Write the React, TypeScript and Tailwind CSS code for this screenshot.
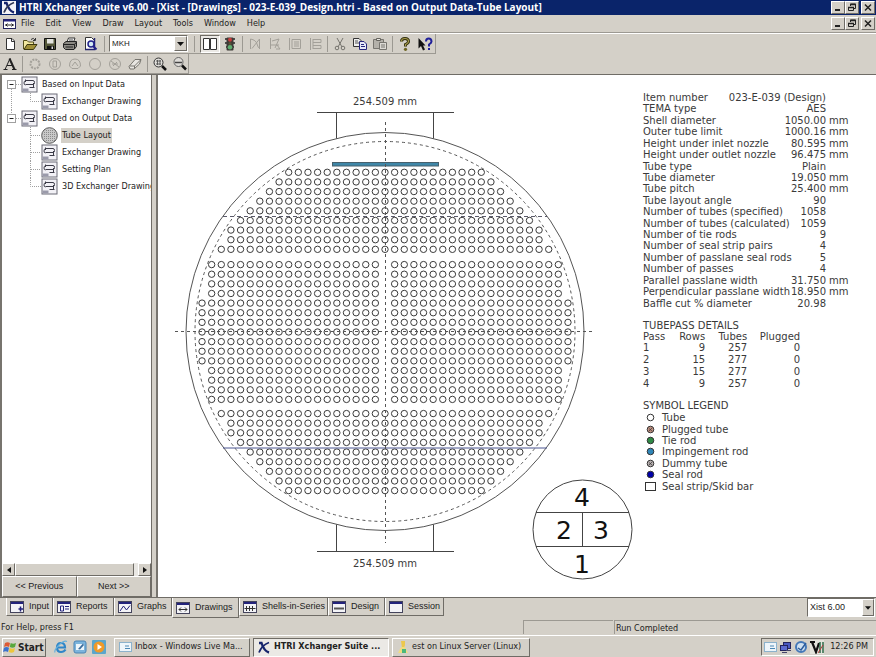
import React, { useState } from 'react';

const RAISED = 'border border-t-white border-l-white border-r-[#6f6c66] border-b-[#6f6c66]';
const SUNKEN = 'border border-t-[#6f6c66] border-l-[#6f6c66] border-r-white border-b-white';
const UI_FONT = "font-['DejaVu_Sans_Condensed','DejaVu_Sans',sans-serif]";
const MS_FONT = "font-['Liberation_Sans',sans-serif]";

interface TreeItem {
  label: string;
  level: number;
  icon?: 'drawing' | 'tubes';
  last?: boolean;
}

const treeItems: TreeItem[] = [
  { label: 'Based on Input Data', level: 0 },
  { label: 'Exchanger Drawing', level: 1, last: true },
  { label: 'Based on Output Data', level: 0, last: true },
  { label: 'Tube Layout', level: 1, icon: 'tubes' },
  { label: 'Exchanger Drawing', level: 1 },
  { label: 'Setting Plan', level: 1 },
  { label: '3D Exchanger Drawing', level: 1, last: true },
];

const details: [string, string, string?][] = [
  ['Item number', '023-E-039 (Design)'],
  ['TEMA type', 'AES'],
  ['Shell diameter', '1050.00', 'mm'],
  ['Outer tube limit', '1000.16', 'mm'],
  ['Height under inlet nozzle', '80.595', 'mm'],
  ['Height under outlet nozzle', '96.475', 'mm'],
  ['Tube type', 'Plain'],
  ['Tube diameter', '19.050', 'mm'],
  ['Tube pitch', '25.400', 'mm'],
  ['Tube layout angle', '90'],
  ['Number of tubes (specified)', '1058'],
  ['Number of tubes (calculated)', '1059'],
  ['Number of tie rods', '9'],
  ['Number of seal strip pairs', '4'],
  ['Number of passlane seal rods', '5'],
  ['Number of passes', '4'],
  ['Parallel passlane width', '31.750', 'mm'],
  ['Perpendicular passlane width', '18.950', 'mm'],
  ['Baffle cut % diameter', '20.98'],
];

const passes = [
  [1, 9, 257, 0],
  [2, 15, 277, 0],
  [3, 15, 277, 0],
  [4, 9, 257, 0],
];

const legend = [
  { label: 'Tube', fill: '#ffffff' },
  { label: 'Plugged tube', fill: '#c09080' },
  { label: 'Tie rod', fill: '#2f8a45' },
  { label: 'Impingement rod', fill: '#2f86b8' },
  { label: 'Dummy tube', fill: '#b8b0b0' },
  { label: 'Seal rod', fill: '#0000a8' },
  { label: 'Seal strip/Skid bar', fill: '' },
];

// Tube field geometry, in drawing units
const CX = 227;
const CY = 257;
const PITCH = 9.63;
const outerRows = [10, 11, 12, 13, 14, 15, 16, 16, 17];

function buildTubes() {
  const tubes: { x: number; y: number }[] = [];
  outerRows.forEach((n, row) => {
    for (let i = -n; i <= n; i++) {
      tubes.push({ x: CX + i * PITCH, y: 97.3 + row * PITCH });
      tubes.push({ x: CX + i * PITCH, y: 415.6 - row * PITCH });
    }
  });
  for (let row = 0; row < 15; row++) {
    const n = row >= 4 && row <= 10 ? 19 : 18;
    for (let i = 1; i <= n; i++) {
      tubes.push({ x: CX - i * PITCH, y: CY + (row - 7) * PITCH });
      tubes.push({ x: CX + i * PITCH, y: CY + (row - 7) * PITCH });
    }
  }
  return tubes;
}

const tubes = buildTubes();

function TubeLayoutDrawing() {
  return (
    <svg width="476" height="522" viewBox="0 0 476 522" className="shrink-0" fontFamily="'DejaVu Sans', sans-serif" fill="none">
      {/* Shell and outer tube limit */}
      <circle cx={CX} cy="256.5" r="199" stroke="#555" />
      <circle cx={CX} cy="256.5" r="190" stroke="#555" strokeDasharray="3 3" />

      {/* Nozzles */}
      <g stroke="#444">
        <path d="M159 37.5H296M178.5 37.5V63.5M275.5 37.5V63.5" />
        <path d="M159 476.5H296M178.5 476.5V449.5M275.5 476.5V449.5" />
      </g>

      {tubes.map((t, i) => (
        <circle key={i} cx={t.x} cy={t.y} r="3.2" stroke="#3a3a3a" />
      ))}

      {/* Impingement plate */}
      <rect x="174.5" y="87.5" width="106" height="3.5" fill="#3f87a8" stroke="#47606c" />

      {/* Baffle cuts and centre lines */}
      <path d="M65 141.5H389" stroke="#5a5a6a" strokeDasharray="4 3" />
      <path d="M65 373H389" stroke="#4a5590" />
      <path d="M227.5 47V468M17 256.5H437" stroke="#555" strokeDasharray="3 3" />

      <g fill="#3a3a3a" fontSize="10" textAnchor="middle">
        <text x="227" y="30">254.509 mm</text>
        <text x="227" y="492">254.509 mm</text>
      </g>

      {/* Pass arrangement key */}
      <circle cx="424.5" cy="454.5" r="49.5" stroke="#444" />
      <path d="M378 437.5H471M378 471.5H471M424.5 437.5V471.5" stroke="#444" />
      <g fill="#111" fontSize="25" textAnchor="middle">
        <text x="424" y="431">4</text>
        <text x="406" y="464">2</text>
        <text x="443" y="464">3</text>
        <text x="424" y="498">1</text>
      </g>
    </svg>
  );
}

function DetailsPanel() {
  return (
    <div className="pl-[9px] pt-[17px] shrink-0 text-[10px] leading-[11px] text-[#3a3a3a] font-['DejaVu_Sans',sans-serif] whitespace-nowrap">
      <dl className="grid h-[217px] w-[204px]">
        {details.map(([label, value, unit]) => (
          <div key={label} className="flex">
            <dt>{label}</dt>
            <dd className="ml-auto">{value}</dd>
            <dd className="w-[21px] pl-[3px]">{unit}</dd>
          </div>
        ))}
      </dl>

      <table className="mt-[11px] h-[58px] border-collapse text-right">
        <caption className="text-left">TUBEPASS DETAILS</caption>
        <thead>
          <tr>
            <th className="w-[22px] p-0 text-left font-normal">Pass</th>
            <th className="w-[40px] p-0 font-normal">Rows</th>
            <th className="w-[42px] p-0 font-normal">Tubes</th>
            <th className="w-[53px] p-0 font-normal">Plugged</th>
          </tr>
        </thead>
        <tbody>
          {passes.map(([pass, rows, count, plugged]) => (
            <tr key={pass}>
              <td className="p-0 text-left">{pass}</td>
              <td className="p-0">{rows}</td>
              <td className="p-0">{count}</td>
              <td className="p-0">{plugged}</td>
            </tr>
          ))}
        </tbody>
      </table>

      <h2 className="mt-[11px] mb-px">SYMBOL LEGEND</h2>
      <ul className="grid h-[80px]">
        {legend.map(item => (
          <li key={item.label} className="flex items-center">
            <svg width="19" height="11" viewBox="0 0 19 11" fill="none" stroke="#333">
              {item.fill ? <circle cx="7.5" cy="5.5" r="3.3" fill={item.fill} /> : <rect x="2.5" y="1.5" width="10" height="8" />}
              {(item.label === 'Plugged tube' || item.label === 'Dummy tube') && <path d="M6 4.5L9 7M9 4L6 7" strokeWidth=".7" />}
            </svg>
            {item.label}
          </li>
        ))}
      </ul>
    </div>
  );
}

function DrawingIcon() {
  return (
    <svg width="17" height="17" viewBox="0 0 17 17" fill="none" className="shrink-0">
      <rect x="1" y="1" width="15" height="15" fill="#f2f1f6" stroke="#6a6a76" />
      <path d="M1.5 12.5H7.5V15.5H1.5Z" fill="#9a9aaa" />
      <path d="M4.500 3.500V6M4.500 4.500H12Q13.500 4.500 13.500 6.500T12 8.500H4.500M12.500 7V11M4.500 4.500Q3 5 3 7T4.500 9M8.500 11.500H13.500" stroke="#3c3c48" />
    </svg>
  );
}

function TubesIcon() {
  const dots = [];
  for (let y = 3; y < 15; y += 2) {
    for (let x = 3; x < 15; x += 2) {
      if (Math.hypot(x - 8.5, y - 8.5) < 7) dots.push(<circle key={`${x}-${y}`} cx={x + 0.5} cy={y + 0.5} r="0.5" fill="#777" />);
    }
  }
  return (
    <svg width="17" height="17" viewBox="0 0 17 17" className="shrink-0">
      <circle cx="8.5" cy="8.5" r="7.8" fill="#c9c9c9" stroke="#555" />
      {dots}
    </svg>
  );
}

function Expander({ last }: { last?: boolean }) {
  return (
    <svg width="20" height="17" viewBox="0 0 20 17" fill="none" className="shrink-0">
      <path d={last ? 'M10.5 0V4M15 8.5H20' : 'M10.5 13V17M15 8.5H20'} stroke="#a8a8a8" strokeDasharray="1 1" />
      <rect x="6.5" y="4.500" width="8" height="8" fill="#fff" stroke="#a0a0a0" />
      <path d="M8.500 8.500H12.500" stroke="#222" />
    </svg>
  );
}

function Branch({ d }: { d: string }) {
  return (
    <svg width="20" height="17" viewBox="0 0 20 17" fill="none" className="shrink-0">
      <path d={d} stroke="#a0a0a0" strokeDasharray="1 1" />
    </svg>
  );
}

function Sidebar() {
  const [selected, setSelected] = useState(3);
  return (
    <aside className="flex w-[152px] shrink-0 flex-col border-l-2 border-l-[#77746e] border-r border-r-[#6f6c66] bg-white">
      <ul className="-ml-px flex-1 overflow-hidden pt-px text-[9px] text-[#222]">
        {treeItems.map((item, i) => (
          <li key={i} className="flex h-[17px] items-center whitespace-nowrap">
            {item.level === 0 ? (
              <Expander last={item.last} />
            ) : (
              <>
                <Branch d={i === 1 ? 'M10.5 0V17' : ''} />
                <Branch d={item.last ? 'M9.5 0V8.5H20' : 'M9.5 0V17M10 8.5H20'} />
              </>
            )}
            {item.icon === 'tubes' ? <TubesIcon /> : <DrawingIcon />}
            <button
              onClick={() => setSelected(i)}
              className={`ml-[3px] h-[15px] px-px ${selected === i ? 'bg-[#d4d0c8]' : ''}`}
            >
              {item.label}
            </button>
          </li>
        ))}
      </ul>

      <div className="flex h-[13px] bg-[#e9e7e3]">
        <button aria-label="Scroll left" className={`flex w-[13px] items-center justify-center bg-[#d4d0c8] ${RAISED}`}>
          <svg width="4" height="6" viewBox="0 0 4 6"><path d="M4 0V6L0 3Z" fill="#111" /></svg>
        </button>
        <div className={`w-[119px] bg-[#d4d0c8] ${RAISED}`} />
        <button aria-label="Scroll right" className={`ml-auto flex w-[13px] items-center justify-center bg-[#d4d0c8] ${RAISED}`}>
          <svg width="4" height="6" viewBox="0 0 4 6"><path d="M0 0V6L4 3Z" fill="#111" /></svg>
        </button>
      </div>
      <div className={`flex h-[21px] text-[9px] text-[#222] ${MS_FONT}`}>
        <button className={`flex-1 bg-[#d4d0c8] ${RAISED}`}>&lt;&lt; Previous</button>
        <button className={`flex-1 bg-[#d4d0c8] ${RAISED}`}>Next &gt;&gt;</button>
      </div>
    </aside>
  );
}

function WindowButtons() {
  const btn = `flex h-[13px] w-[14px] items-center justify-center bg-[#d4d0c8] ${RAISED}`;
  return (
    <div className="ml-auto flex pr-px">
      <button aria-label="Minimize" className={btn}>
        <svg width="10" height="9" viewBox="0 0 10 9"><path d="M2 7H7" stroke="#222" strokeWidth="2" /></svg>
      </button>
      <button aria-label="Restore" className={btn}>
        <svg width="10" height="9" viewBox="0 0 10 9" fill="none" stroke="#222">
          <path d="M3.500 3V1H8.500V5.500H7" />
          <path d="M3 1.500H9M1 4.500H7" strokeWidth="1.500" />
          <path d="M1.500 4V7.500H6.500V4" />
        </svg>
      </button>
      <button aria-label="Close" className={`${btn} ml-[2px]`}>
        <svg width="10" height="9" viewBox="0 0 10 9"><path d="M2 1.500L8 7.500M8 1.500L2 7.500" stroke="#222" strokeWidth="1.500" /></svg>
      </button>
    </div>
  );
}

function XLogo({ dark }: { dark?: boolean }) {
  return (
    <svg width="14" height="13" viewBox="0 0 14 13" fill="none" className="shrink-0">
      {!dark && <rect width="14" height="13" fill="#f4f4f8" />}
      <path d="M2 2H4.500Q7 10 12 11.500" stroke="#16246c" strokeWidth="2.400" />
      <path d="M12 1.500Q5 4 2 11.500" stroke={dark ? '#16246c' : '#333a55'} strokeWidth="1.800" />
    </svg>
  );
}

function ToolButton({ label, pressed, children }: { label: string; pressed?: boolean; children: React.ReactNode }) {
  return (
    <button
      aria-label={label}
      className={`flex h-[18px] w-[20px] shrink-0 items-center justify-center ${pressed ? `bg-[#ebe9e5] ${SUNKEN}` : ''}`}
    >
      <svg width="16" height="16" viewBox="0 0 16 16" fill="none" className="shrink-0">
        {children}
      </svg>
    </button>
  );
}

function Separator() {
  return <div className="mx-[2px] h-[16px] w-px shrink-0 bg-[#9c9992]" />;
}

const GREY = '#a3a099';

function MainToolbar() {
  return (
    <div className="flex h-[20px] w-[436px] items-center border-r border-b border-[#9c9992]">
      <ToolButton label="New"><path d="M4.500 2.500H10L12.500 5V13.500H4.500Z" fill="#fff" stroke="#333" /><path d="M9.500 2.500V5.500H12.500" stroke="#333" /></ToolButton>
      <ToolButton label="Open">
        <path d="M1.500 13V4.500H5L6.500 6H11.500V8" fill="#f3e9a0" stroke="#55501c" />
        <path d="M2 13.500L5 8.500H15L11.500 13.500Z" fill="#a09038" stroke="#3c380e" />
        <path d="M9 3.500Q11.500 1 13 4M13.500 2V4.500H11" stroke="#333" />
      </ToolButton>
      <ToolButton label="Save">
        <path d="M2.500 2.500H13.500V13.500H2.500Z" fill="#55583a" stroke="#111" />
        <path d="M5 3H11.500V7.500H5Z" fill="#e4e4e0" />
        <path d="M5 10H12V13H5Z" fill="#111" /><path d="M9.500 10.500H11V13H9.500Z" fill="#ddd" />
      </ToolButton>
      <ToolButton label="Print">
        <path d="M5 6L6.500 2H13L11.500 6Z" fill="#fff" stroke="#333" />
        <path d="M1.500 7.500L4 5.500H14.500V10.500L12 13.500H3.500L1.500 11.500Z" fill="#8b8983" stroke="#222" />
        <path d="M2 8.500H12.500L14.500 6M3.500 11H11M12.500 8.500V13" stroke="#222" />
        <path d="M7 4H11" stroke="#444" />
      </ToolButton>
      <ToolButton label="Print Preview">
        <path d="M3.500 1.500H9.500L12.500 4.500V13.500H3.500Z" fill="#fff" stroke="#333" />
        <path d="M12.500 2V13.500H3" stroke="#23236e" strokeWidth="1.500" />
        <circle cx="9" cy="8" r="3" fill="#d6ecf4" stroke="#22228a" strokeWidth="1.500" />
        <path d="M11 10L14.500 13.500" stroke="#22228a" strokeWidth="2" />
      </ToolButton>
      <div className="mx-[4px] h-[16px] w-px bg-[#9c9992]" />
      <div className={`relative flex h-[17px] w-[81px] bg-white ${SUNKEN}`}>
        <select aria-label="Unit set" className={`w-full appearance-none pl-[2px] text-[8px] text-[#222] ${MS_FONT}`}>
          <option>MKH</option>
        </select>
        <span className={`pointer-events-none absolute inset-y-0 right-0 flex w-[13px] items-center justify-center bg-[#d4d0c8] ${RAISED}`}>
          <svg width="7" height="4" viewBox="0 0 7 4"><path d="M0 0H7L3.500 4Z" fill="#111" /></svg>
        </span>
      </div>
      <div className="ml-[6px] mr-[5px] h-[16px] w-px bg-[#9c9992]" />
      <ToolButton label="Input panels" pressed>
        <path d="M1.500 2.500H7.500V13.500H1.500ZM8.500 2.500H14.500V13.500H8.500Z" fill="#fff" stroke="#333" />
      </ToolButton>
      <ToolButton label="Run">
        <path d="M3 3H13M3 7H13M4 11H12" stroke="#222" strokeWidth="1.500" />
        <rect x="4.500" y="1.500" width="7" height="13" rx="1" fill="#3d3a36" />
        <circle cx="8" cy="3.800" r="2" fill="#c83c3c" />
        <circle cx="8" cy="7.600" r="1.500" fill="#5a5238" />
        <circle cx="8" cy="11.300" r="2.300" fill="#5fae70" />
      </ToolButton>
      <Separator />
      <ToolButton label="Case">
        <path d="M3.500 3V13M3.500 3Q9 4 10 8T13 13M12.500 3L5 12.500M12.500 3V13" stroke={GREY} />
      </ToolButton>
      <ToolButton label="Profile">
        <path d="M3.500 2V13M3.500 9H12M5 5L12 3M12 3L8 12M9 13H13M10 9L13 13" stroke={GREY} />
      </ToolButton>
      <ToolButton label="Grid">
        <path d="M2.500 2V14M5 3.500H13.500V12.500H5ZM7 6H12M7 8H12M7 10H12" stroke={GREY} />
      </ToolButton>
      <ToolButton label="Chart">
        <path d="M3.500 2V14M6 3.500H14V6.500H6M6 9.500H14V12.500H6M6 3V13" stroke={GREY} />
      </ToolButton>
      <Separator />
      <ToolButton label="Cut">
        <path d="M5 2L10 11M11 2L6 11" stroke="#77756f" />
        <circle cx="5" cy="12" r="1.800" stroke="#77756f" /><circle cx="11" cy="12" r="1.800" stroke="#77756f" />
      </ToolButton>
      <ToolButton label="Copy">
        <path d="M1.500 2.500H7L9.500 5V10.500H1.500Z" fill="#eee" stroke="#333" />
        <path d="M3 5H6M3 7H7" stroke="#555" />
        <path d="M7.500 5.500H12L14.500 8V13.500H7.500Z" fill="#e6e8f8" stroke="#26267c" />
        <path d="M9 8.500H12M9 10.500H13" stroke="#26267c" />
      </ToolButton>
      <ToolButton label="Paste">
        <path d="M1.500 3.500H11.500V12.500H1.500Z" fill="#b4b1aa" stroke="#77756f" />
        <path d="M4.500 2.500H8.500V4.500H4.500Z" fill="#e6e4df" stroke="#66645e" />
        <path d="M7.500 6.500H14.500V13.500H7.500Z" fill="#dcdad4" stroke="#77756f" /><path d="M9 9H13M9 11H13" stroke="#77756f" />
      </ToolButton>
      <Separator />
      <ToolButton label="Help">
        <path d="M4.500 5.500Q4.500 2.500 8 2.500T11.500 5.500Q11.500 7 8.500 8.500V10.500" stroke="#33300f" strokeWidth="3" />
        <path d="M4.500 5.500Q4.500 2.500 8 2.500T11.500 5.500Q11.500 7 8.500 8.500V10" stroke="#a89c4c" strokeWidth="1.200" />
        <circle cx="8.500" cy="13.300" r="1.600" fill="#6c6320" />
      </ToolButton>
      <ToolButton label="Context Help">
        <path d="M1.500 2V12.500L4 10L6 14.500L8 13.500L6 9.500H8.500Z" fill="#111" />
        <path d="M9 5.500Q9 2.500 11.700 2.500T14.500 5.500Q14.500 7 12 8.500V10.500M12 12V14" stroke="#20209a" strokeWidth="2" />
      </ToolButton>
    </div>
  );
}

function DrawToolbar() {
  return (
    <div className="flex h-[20px] w-[189px] items-center border-r border-b border-[#9c9992]">
      <ToolButton label="Text">
        <path d="M3 13.500L8 2.500M5 9.500H11" stroke="#222" />
        <path d="M7.500 2.500L12.500 13.500" stroke="#222" strokeWidth="2" />
        <path d="M1.500 13.500H5.500M10 13.500H14.500" stroke="#222" />
      </ToolButton>
      <Separator />
      <ToolButton label="Tube"><circle cx="8" cy="8" r="4.500" stroke={GREY} strokeDasharray="2 1" strokeWidth="2" /></ToolButton>
      <ToolButton label="Plugged"><circle cx="8" cy="8" r="5.500" stroke={GREY} /><path d="M6 5H9.500V11H6Z" stroke={GREY} /></ToolButton>
      <ToolButton label="Tie rod"><path d="M2.500 10Q2.500 3 8 3T13.500 10L11 12.500H5ZM5 10L8 6L11 10" stroke={GREY} /></ToolButton>
      <ToolButton label="Rod"><circle cx="8" cy="8" r="5.500" stroke={GREY} /></ToolButton>
      <ToolButton label="Dummy"><circle cx="8" cy="8" r="5.500" stroke={GREY} /><path d="M4 5L12 11M6 10L10 6M5 8H11" stroke={GREY} /></ToolButton>
      <ToolButton label="Erase"><path d="M2 10.500L8 3.500H14L12.500 8L7 13H3Z" fill="#e8e6e2" stroke="#77756f" /><path d="M2.500 10H7.500L13.500 4M7.500 10V13" stroke="#77756f" /></ToolButton>
      <Separator />
      <ToolButton label="Zoom In">
        <circle cx="6.500" cy="6.500" r="4.500" fill="#dedcd8" stroke="#333" /><path d="M4 5H9M4 8H9M5.500 4V9M8 4V9" stroke="#444" strokeWidth=".8" />
        <path d="M10 10L14 14" stroke="#111" strokeWidth="2.500" />
      </ToolButton>
      <ToolButton label="Zoom Out">
        <circle cx="6.500" cy="6" r="4.500" fill="#dedcd8" stroke="#666" /><path d="M3 6.500H10" stroke="#444" strokeWidth="1.500" />
        <path d="M10 9.500L14 13.500" stroke="#111" strokeWidth="2.500" />
      </ToolButton>
    </div>
  );
}

function TabIcon({ kind }: { kind: string }) {
  return (
    <svg width="14" height="12" viewBox="0 0 14 12" fill="none" className="shrink-0">
      <rect x=".5" y=".5" width="13" height="11" fill="#f3f3f7" stroke="#44445c" />
      <rect x="1" y="1" width="12" height="2" fill="#23237c" />
      {kind === 'Input' && <path d="M8.500 8H13M10.500 5.500V10.500" stroke="#23237c" strokeWidth="1.500" />}
      {kind === 'Reports' && <path d="M3.500 5H6.500V10H3.500ZM8 5.500H12M8 8H12" stroke="#23237c" />}
      {kind === 'Graphs' && <path d="M2 10L5.500 5L8.500 9L12 4.500" stroke="#23237c" />}
      {kind === 'Drawings' && <path d="M3 7.500H11M5 5.500L3 7.500L5 9.500M9 5.500L11 7.500L9 9.500" stroke="#333" />}
      {kind === 'Shells-in-Series' && <path d="M1.500 7.500H12.500M3.500 5V10M6.500 5V10M9.500 5V10" stroke="#333" />}
      {kind === 'Design' && <path d="M2 7.500H12" stroke="#555" strokeWidth="2" />}
    </svg>
  );
}

const tabs = [
  { name: 'Input', width: 'w-[47px]' },
  { name: 'Reports', width: 'w-[61px]' },
  { name: 'Graphs', width: 'w-[58px]' },
  { name: 'Drawings', width: 'w-[67px]' },
  { name: 'Shells-in-Series', width: 'w-[89px]' },
  { name: 'Design', width: 'w-[57px]' },
  { name: 'Session', width: 'w-[59px]' },
];

function ViewTabs() {
  const [active, setActive] = useState('Drawings');
  return (
    <div className="flex h-[21px] items-start border-t border-[#6f6c66] pl-[6px] pr-px">
      {tabs.map(tab => (
        <button
          key={tab.name}
          onClick={() => setActive(tab.name)}
          className={`flex shrink-0 items-center gap-[5px] whitespace-nowrap border-r border-b border-[#6f6c66] border-l border-l-white pt-px pl-[3px] text-[9px] text-[#222] ${MS_FONT} ${tab.width} ${active === tab.name ? 'h-[20px]' : 'h-[18px]'}`}
        >
          <TabIcon kind={tab.name} />
          {tab.name}
        </button>
      ))}
      <div className={`relative ml-auto flex h-[19px] w-[68px] bg-white ${SUNKEN}`}>
        <select aria-label="Method version" className={`w-full appearance-none pl-[2px] text-[9px] text-[#222] ${MS_FONT}`}>
          <option>Xist 6.00</option>
        </select>
        <span className={`pointer-events-none absolute inset-y-0 right-0 flex w-[12px] items-center justify-center bg-[#d4d0c8] ${RAISED}`}>
          <svg width="6" height="4" viewBox="0 0 7 4"><path d="M0 0H7L3.500 4Z" fill="#111" /></svg>
        </span>
      </div>
    </div>
  );
}

function Taskbar() {
  return (
    <footer className="flex h-[22px] items-center border-t border-white pl-[2px] pr-[2px] pt-px text-[9px] text-[#222]">
      <button className={`flex h-[19px] w-[44px] items-center gap-px text-[10px] font-bold ${RAISED}`}>
        <svg width="14" height="14" viewBox="0 0 14 14" className="shrink-0">
          <path d="M2 3Q4.500 1.500 7 3L6 7Q3.500 5.500 1 7Z" fill="#dd5a35" />
          <path d="M7.700 3Q10 4.500 13 3L12 7Q9.500 8.500 6.800 7Z" fill="#58a83c" />
          <path d="M1 7.700Q3.500 6.500 6 7.700L5 12Q2.500 10.500 0 12Z" fill="#3c72cc" />
          <path d="M6.700 7.800Q9 9.500 12 8L11 12Q8.500 13.500 5.700 12Z" fill="#ecc63c" />
        </svg>
        Start
      </button>
      <div className="flex w-[68px] items-center gap-[5px] pl-[8px]">
        <button aria-label="Internet Explorer">
          <svg width="14" height="14" viewBox="0 0 14 14" fill="none">
            <path d="M11.500 9.500Q10 12 7 12Q3 12 3 7.500T7 3Q11 3 11 7.500H4" stroke="#2f86c8" strokeWidth="2.200" />
            <path d="M1 12.500Q0 10 5 5T13 1.500" stroke="#66b0dc" strokeWidth="1.200" />
          </svg>
        </button>
        <button aria-label="Show Desktop">
          <svg width="14" height="14" viewBox="0 0 14 14" fill="none">
            <rect x="1" y="1" width="12" height="12" rx="2" fill="#7cb4dc" stroke="#4a84b4" />
            <path d="M3 4H11V10H3Z" fill="#eef6fb" /><path d="M5 9L10 3.500L11 5L7 9.500Z" fill="#3a6c9c" />
          </svg>
        </button>
        <button aria-label="Media Player">
          <svg width="14" height="14" viewBox="0 0 14 14">
            <rect x="0" y="0" width="14" height="14" rx="1" fill="#5aa6cc" /><circle cx="7" cy="7" r="5.500" fill="#f09a28" /><path d="M5.500 4V10L10 7Z" fill="#fff" />
          </svg>
        </button>
      </div>
      <button className={`flex h-[19px] w-[136px] items-center gap-[3px] whitespace-nowrap pl-[4px] ${RAISED}`}>
        <svg width="13" height="12" viewBox="0 0 13 12"><rect x=".5" y="1.500" width="12" height="9" fill="#eef5fa" stroke="#8cb2cc" /><path d="M6 5H10M6 7.500H11" stroke="#4c88b4" /></svg>
        Inbox - Windows Live Ma...
      </button>
      <button className={`ml-[3px] flex h-[19px] w-[136px] items-center gap-[3px] whitespace-nowrap bg-[#ebe9e5] pl-[3px] font-bold ${SUNKEN}`}>
        <XLogo dark />
        HTRI Xchanger Suite ...
      </button>
      <button className={`ml-[3px] flex h-[19px] w-[138px] items-center gap-[3px] whitespace-nowrap pl-[4px] ${RAISED}`}>
        <svg width="12" height="14" viewBox="0 0 12 14"><path d="M4 1H8V5L7 8H5Z" fill="#ecc84c" /><path d="M1 13L4 7H8L11 13Z" fill="#f0dc80" /><path d="M5 9H9V13H5Z" fill="#4ab87c" /></svg>
        est on Linux Server (Linux)
      </button>
      <div className={`ml-auto flex h-[18px] w-[113px] items-center gap-[2px] pl-[2px] ${SUNKEN}`}>
        <svg width="13" height="12" viewBox="0 0 13 12"><rect x=".5" y="1.500" width="12" height="9" fill="#eef5fa" stroke="#8cb2cc" /><path d="M6 5H10M6 7.500H11" stroke="#4c88b4" /></svg>
        <svg width="13" height="13" viewBox="0 0 13 13"><rect x="4.500" y="1.500" width="7" height="6" fill="#4a58c0" stroke="#23235c" /><rect x="1.500" y="4.500" width="7" height="5" fill="#5c6ad0" stroke="#23235c" /><path d="M3 11.500H8M7 9.500H12" stroke="#444468" /></svg>
        <svg width="14" height="14" viewBox="0 0 14 14" fill="none"><circle cx="7" cy="7" r="5" fill="#cfe0f0" stroke="#4478b8" strokeWidth="2" /><path d="M4 8L7 10L12 3" stroke="#2c5c9c" strokeWidth="1.500" /></svg>
        <svg width="14" height="14" viewBox="0 0 14 14" fill="none"><rect width="14" height="14" fill="#e4e4dc" /><path d="M0 2H5M2 2L6 12L9 3" stroke="#111" strokeWidth="2.200" /><path d="M10 2V13M13 2V13" stroke="#2c6a48" strokeWidth="1.500" /><path d="M8 13L13 5" stroke="#b43c3c" /></svg>
        <time className="ml-auto whitespace-nowrap pr-[5px]">12:26 PM</time>
      </div>
    </footer>
  );
}

const menus = ['File', 'Edit', 'View', 'Draw', 'Layout', 'Tools', 'Window', 'Help'];

function App() {
  return (
    <div className={`flex h-screen w-full flex-col overflow-hidden bg-[#d4d0c8] ${UI_FONT}`}>
      <header className="flex h-[15px] shrink-0 items-center gap-[3px] bg-[#0a246a] pl-[2px]">
        <XLogo />
        <h1 className="whitespace-nowrap text-[10px] leading-[13px] font-bold text-white font-['Open_Sans',sans-serif]">
          HTRI Xchanger Suite v6.00 - [Xist - [Drawings] - 023-E-039_Design.htri - Based on Output Data-Tube Layout]
        </h1>
        <WindowButtons />
      </header>

      <nav className="flex h-[18px] shrink-0 items-center border-b border-[#9c9992] pl-[3px] text-[9px] text-[#222]">
        <svg width="13" height="10" viewBox="0 0 13 10" fill="none" className="mr-[5px]">
          <rect x=".5" y=".5" width="12" height="9" fill="#fff" stroke="#23235c" /><path d="M1 1.500H12" stroke="#23237c" strokeWidth="2" />
          <path d="M2 6H11M4.500 4.500L3 6L4.500 7.500M8.500 4.500L10 6L8.500 7.500" stroke="#222" />
        </svg>
        <div className="flex gap-[11px]">
          {menus.map(m => (
            <button key={m}>{m}</button>
          ))}
        </div>
        <WindowButtons />
      </nav>

      <div className="h-[42px] shrink-0 border-t border-white border-b border-b-[#6f6c66]">
        <MainToolbar />
        <DrawToolbar />
      </div>

      <main className="flex min-h-0 flex-1">
        <Sidebar />
        <div className="w-[4px] shrink-0" />
        <section className="flex min-w-0 flex-1 items-start overflow-hidden border-l-2 border-[#77746e] bg-white">
          <TubeLayoutDrawing />
          <DetailsPanel />
        </section>
      </main>

      <ViewTabs />

      <div className="mt-px flex h-[16px] shrink-0 items-center gap-px text-[9px] text-[#222]">
        <p className="h-[14px] flex-1 pl-px leading-[15px]">For Help, press F1</p>
        <div className="h-[14px] w-[90px] border-t border-l border-[#9c9992]" />
        <p className="h-[14px] w-[262px] border-t border-l border-[#9c9992] pl-px leading-[14px]">Run Completed</p>
      </div>

      <Taskbar />
    </div>
  );
}

export default App;
